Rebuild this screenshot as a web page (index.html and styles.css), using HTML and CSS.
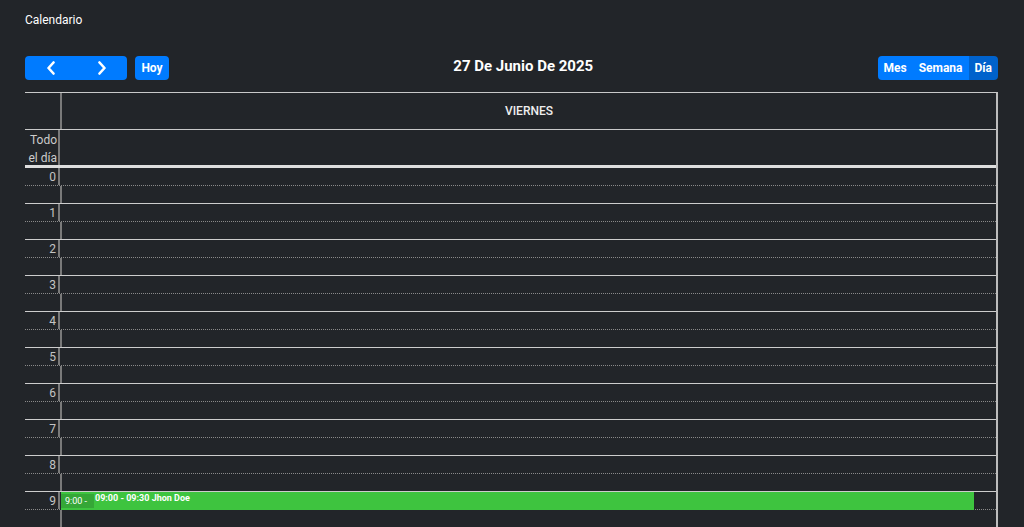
FILE: index.html
```html
<!DOCTYPE html>
<html lang="es">
<head>
<meta charset="utf-8">
<title>Calendario</title>
<link rel="stylesheet" href="styles.css">
</head>
<body>
<div class="page">
  <h1 class="page-title">Calendario</h1>
  <div class="toolbar">
    <div class="tb-left">
      <div class="btn-group">
        <button class="btn nav"><svg width="10" height="14" viewBox="0 0 10 14"><path d="M7.5 1.5 L2.5 7 L7.5 12.5" fill="none" stroke="#fff" stroke-width="2.6" stroke-linecap="round" stroke-linejoin="round"/></svg></button>
        <button class="btn nav"><svg width="10" height="14" viewBox="0 0 10 14"><path d="M2.5 1.5 L7.5 7 L2.5 12.5" fill="none" stroke="#fff" stroke-width="2.6" stroke-linecap="round" stroke-linejoin="round"/></svg></button>
      </div>
      <button class="btn single">Hoy</button>
    </div>
    <div class="tb-title">27 De Junio De 2025</div>
    <div class="tb-right">
      <div class="btn-group">
        <button class="btn view">Mes</button>
        <button class="btn view">Semana</button>
        <button class="btn view active">Día</button>
      </div>
    </div>
  </div>
  <div class="cal">
    <div class="head-row">
      <div class="gut"></div>
      <div class="day-head">VIERNES</div>
    </div>
    <div class="allday-row">
      <div class="gut allday-label">Todo<br>el día</div>
      <div class="day-cell"></div>
    </div>
    <div class="hours">
      <div class="hour"><div class="half top"><div class="gut lbl">0</div><div class="slot"></div></div><div class="half bot"><div class="gut"></div><div class="slot"></div></div></div>
      <div class="hour"><div class="half top"><div class="gut lbl">1</div><div class="slot"></div></div><div class="half bot"><div class="gut"></div><div class="slot"></div></div></div>
      <div class="hour"><div class="half top"><div class="gut lbl">2</div><div class="slot"></div></div><div class="half bot"><div class="gut"></div><div class="slot"></div></div></div>
      <div class="hour"><div class="half top"><div class="gut lbl">3</div><div class="slot"></div></div><div class="half bot"><div class="gut"></div><div class="slot"></div></div></div>
      <div class="hour"><div class="half top"><div class="gut lbl">4</div><div class="slot"></div></div><div class="half bot"><div class="gut"></div><div class="slot"></div></div></div>
      <div class="hour"><div class="half top"><div class="gut lbl">5</div><div class="slot"></div></div><div class="half bot"><div class="gut"></div><div class="slot"></div></div></div>
      <div class="hour"><div class="half top"><div class="gut lbl">6</div><div class="slot"></div></div><div class="half bot"><div class="gut"></div><div class="slot"></div></div></div>
      <div class="hour"><div class="half top"><div class="gut lbl">7</div><div class="slot"></div></div><div class="half bot"><div class="gut"></div><div class="slot"></div></div></div>
      <div class="hour"><div class="half top"><div class="gut lbl">8</div><div class="slot"></div></div><div class="half bot"><div class="gut"></div><div class="slot"></div></div></div>
      <div class="hour"><div class="half top"><div class="gut lbl">9</div><div class="slot"><div class="event"><span class="ev-time">9:00 -</span><span class="ev-title">09:00 - 09:30 Jhon Doe</span></div></div></div><div class="half bot"><div class="gut"></div><div class="slot"></div></div></div>
    </div>
  </div>
</div>
</body>
</html>
```

FILE: styles.css
```css
html, body {
  margin: 0;
  padding: 0;
  background: #222529;
  height: 527px;
  overflow: hidden;
}
body {
  font-family: Roboto, "Liberation Sans", Arial, sans-serif;
  color: #fff;
}
.page {
  padding: 13px 26px 0 25px;
}
.page-title {
  margin: 0;
  font-size: 12px;
  font-weight: 400;
  line-height: 14px;
  color: #fff;
}
.toolbar {
  margin-top: 29px;
  display: flex;
  justify-content: space-between;
  align-items: center;
  height: 24px;
}
.tb-left {
  display: flex;
  gap: 8px;
}
.tb-right {
  display: flex;
  justify-content: flex-end;
}
.tb-title {
  font-size: 15px;
  font-weight: 700;
  color: #fff;
  margin-top: -4px;
}
.btn-group {
  display: flex;
  border-radius: 4px;
  overflow: hidden;
}
.btn {
  border: 0;
  margin: 0;
  height: 24px;
  background: #007bff;
  color: #fff;
  font-family: Roboto, "Liberation Sans", Arial, sans-serif;
  font-size: 12px;
  font-weight: 700;
  padding: 0 6px;
  display: flex;
  align-items: center;
  justify-content: center;
}
.btn.nav {
  width: 51px;
  padding: 0;
}
.btn.single {
  width: 34px;
  border-radius: 4px;
}
.btn.view.active {
  background: #0062cc;
}
.cal {
  margin-top: 12px;
  border-top: 1px solid #c9c9c9;
  border-right: 2px solid #bdbdbd;
}
.gut {
  width: 35px;
  flex: 0 0 35px;
  border-right: 2px solid #7a7a7a;
}
.head-row {
  display: flex;
  height: 36px;
  border-bottom: 1px solid #c9c9c9;
}
.day-head {
  flex: 1;
  text-align: center;
  font-size: 12px;
  font-weight: 500;
  line-height: 36px;
  color: #eee;
}
.allday-row {
  display: flex;
  height: 35px;
  border-bottom: 3px solid #dedede;
}
.allday-label {
  text-align: right;
  font-size: 12px;
  line-height: 18px;
  color: #ccc;
  padding-top: 1px;
  box-sizing: border-box;
  padding-right: 1px;
}
.day-cell {
  flex: 1;
}
.half {
  display: flex;
  height: 17px;
}
.half.top {
  border-bottom: 1px dotted #8a8a8a;
}
.half.bot {
  border-bottom: 1px solid #cdcdcd;
}
.lbl {
  text-align: right;
  font-size: 12px;
  line-height: 17px;
  color: #c4c4c4;
  padding-right: 2px;
  box-sizing: border-box;
  padding-top: 1px;
}
.slot {
  flex: 1;
  min-width: 0;
}
.event {
  margin: 0 22px 0 1px;
  height: 18px;
  background: #3ec43f;
  display: flex;
  align-items: flex-start;
  font-size: 9px;
  color: #fff;
  position: relative;
  z-index: 1;
}
.ev-time {
  background: #35a737;
  height: 14px;
  line-height: 14px;
  padding: 0 4px;
  margin-top: 2px;
  width: 33px;
  box-sizing: border-box;
}
.ev-title {
  font-weight: 700;
  line-height: 12px;
  margin-left: 1px;
}
```
